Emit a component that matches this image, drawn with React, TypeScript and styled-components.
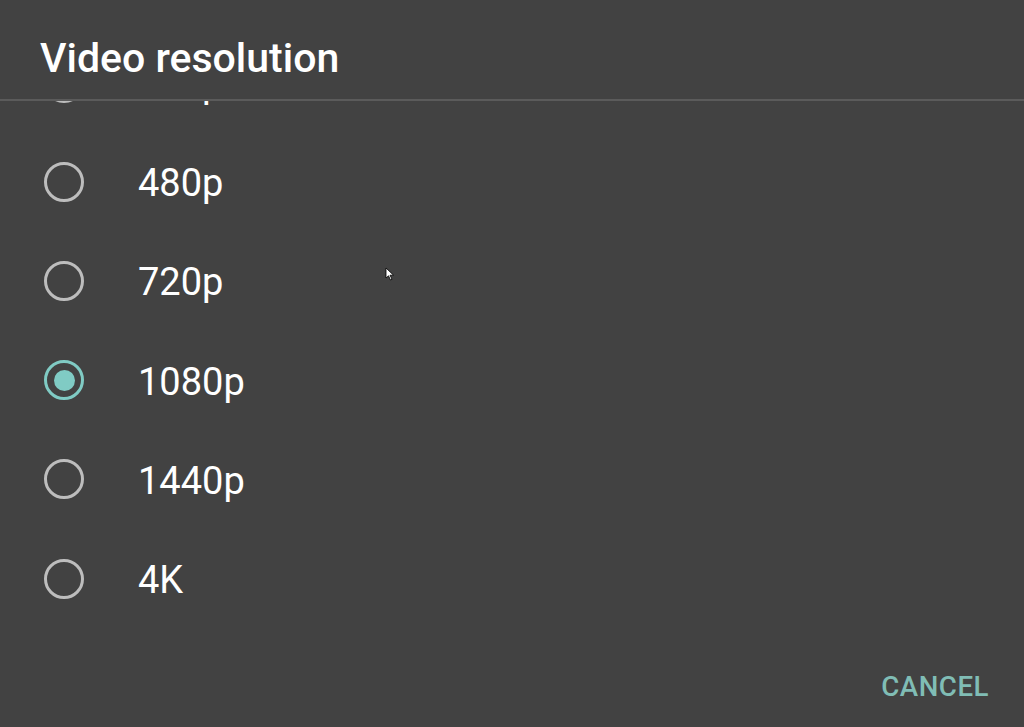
import styled, { createGlobalStyle } from "styled-components";

const GlobalStyle = createGlobalStyle`
  html, body {
    margin: 0;
    padding: 0;
    background: #424242;
  }
  * {
    box-sizing: border-box;
  }
`;

const Dialog = styled.div`
  position: relative;
  display: flex;
  flex-direction: column;
  width: 1024px;
  height: 727px;
  overflow: hidden;
  background-color: #424242;
  font-family: Roboto, "Liberation Sans", sans-serif;
`;

const Header = styled.div`
  display: flex;
  align-items: center;
  height: 99px;
  padding: 16px 0 0 40px;
  flex-shrink: 0;
`;

const Title = styled.h2`
  margin: 0;
  font-size: 41px;
  font-weight: 500;
  color: #ffffff;
`;

const Divider = styled.div`
  height: 2px;
  background-color: #5b5b5b;
  flex-shrink: 0;
`;

const ListViewport = styled.div`
  position: relative;
  height: 540px;
  overflow: hidden;
  flex-shrink: 0;
`;

const List = styled.ul`
  list-style: none;
  margin: -68px 0 0;
  padding: 0;
`;

const Row = styled.li`
  display: flex;
  align-items: center;
  gap: 54px;
  height: 99.2px;
  padding-left: 44px;
`;

const Radio = styled.span<{ $checked: boolean }>`
  display: flex;
  align-items: center;
  justify-content: center;
  width: 40px;
  height: 40px;
  border-radius: 50%;
  border: 3px solid ${(props) => (props.$checked ? "#80cbc4" : "#bdbdbd")};
  flex-shrink: 0;

  &::after {
    content: "";
    display: ${(props) => (props.$checked ? "block" : "none")};
    width: 21px;
    height: 21px;
    border-radius: 50%;
    background-color: #80cbc4;
  }
`;

const Label = styled.span`
  font-size: 38px;
  line-height: 44px;
  padding-top: 3px;
  color: #ffffff;
`;

const Footer = styled.div`
  display: flex;
  justify-content: flex-end;
  align-items: center;
  flex: 1;
  padding: 4px 35px 0 0;
`;

const CancelButton = styled.button`
  border: none;
  background: none;
  padding: 0;
  font-family: Roboto, "Liberation Sans", sans-serif;
  font-size: 27.7px;
  font-weight: 500;
  letter-spacing: 0.5px;
  color: #80bdb5;
`;

const Cursor = styled.svg`
  position: absolute;
  left: 385px;
  top: 267px;
  width: 10px;
  height: 14px;
`;

const resolutions = ["360p", "480p", "720p", "1080p", "1440p", "4K"];
const selected = "1080p";

function App() {
  return (
    <>
      <GlobalStyle />
      <Dialog>
        <Header>
          <Title>Video resolution</Title>
        </Header>
        <Divider />
        <ListViewport>
          <List>
            {resolutions.map((res) => (
              <Row key={res}>
                <Radio $checked={res === selected} />
                <Label>{res}</Label>
              </Row>
            ))}
          </List>
        </ListViewport>
        <Footer>
          <CancelButton>CANCEL</CancelButton>
        </Footer>
        <Cursor viewBox="0 0 10 14">
          <path d="M1 1 L1 11 L3.5 8.8 L5.5 13 L7 12.3 L5 8.2 L8.5 8.2 Z" fill="#ffffff" stroke="#000000" strokeWidth="0.8" />
        </Cursor>
      </Dialog>
    </>
  );
}

export default App;
